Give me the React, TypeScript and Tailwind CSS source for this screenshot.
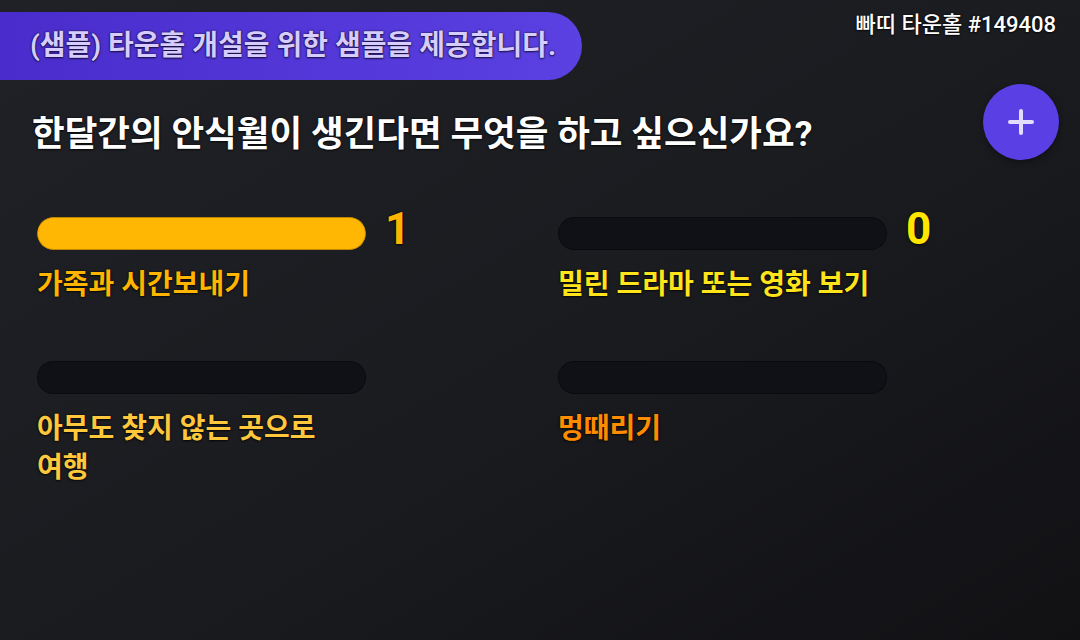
import React from "react"

type Option = {
  label: string
  count: number
  color: string
  countColor: string
}

const options: Option[] = [
  { label: "가족과 시간보내기", count: 1, color: "text-[#ffb400]", countColor: "text-[#ffb400]" },
  { label: "밀린 드라마 또는 영화 보기", count: 0, color: "text-[#ffe41c]", countColor: "text-[#ffe500]" },
  { label: "아무도 찾지 않는 곳으로 여행", count: 0, color: "text-[#ffc83c]", countColor: "" },
  { label: "멍때리기", count: 0, color: "text-[#ff8c00]", countColor: "" },
]

const total = 1
const shadow = "[text-shadow:0_0_2px_rgba(0,0,0,0.85),0_1px_2px_rgba(0,0,0,0.6)]"

function OptionItem({ option }: { option: Option }) {
  const filled = total > 0 ? (option.count / total) * 100 : 0
  return (
    <div className="flex flex-col">
      <div className="flex items-start h-[33px]">
        <div className="w-[329px] h-[33px] rounded-full bg-[#101116] shadow-[inset_0_0_0_1px_rgba(0,0,0,0.35)] overflow-hidden">
          {filled > 0 && (
            <div
              className="h-full rounded-full bg-[#ffb703] shadow-[inset_0_0_0_1px_rgba(150,100,0,0.6)]"
              style={{ width: `${filled}%` }}
            />
          )}
        </div>
        {option.countColor && (
          <span
            className={`ml-[19px] -mt-[10px] text-[44px] leading-[44px] font-bold font-['Roboto',sans-serif] ${option.countColor} ${shadow}`}
          >
            {option.count}
          </span>
        )}
      </div>
      <p
        className={`mt-[15px] w-[329px] break-keep text-[28px] leading-[39px] font-bold ${option.color} ${shadow}`}
      >
        {option.label}
      </p>
    </div>
  )
}

export default function App() {
  return (
    <div className="w-[1080px] h-[640px] overflow-hidden bg-linear-to-br from-[#202126] via-[#1b1c20] to-[#111114] font-['Roboto','Noto_Sans_CJK_KR',sans-serif] text-white">
      {/* 상단 배너 */}
      <div className="flex items-start justify-between">
        <div className="mt-3 h-[68px] w-[582px] rounded-r-full bg-linear-to-r from-[#4a2ccc] to-[#5b40e2] flex items-center pl-[30px]">
          <span className={`text-[28px] font-bold text-[#d6ccff] ${shadow}`}>
            (샘플) 타운홀 개설을 위한 샘플을 제공합니다.
          </span>
        </div>
        <div className={`pt-[8px] pr-6 text-[22px] font-medium text-white ${shadow}`}>
          빠띠 타운홀 #149408
        </div>
      </div>

      {/* 질문 */}
      <div className="mt-1 flex items-start justify-between pl-8 pr-[21px]">
        <h1 className={`pt-[27px] text-[35.5px] leading-[46px] font-bold ${shadow}`}>
          한달간의 안식월이 생긴다면 무엇을 하고 싶으신가요?
        </h1>
        <button className="w-[76px] h-[76px] rounded-full bg-[#5a3fe4] flex items-center justify-center shadow-[0_2px_6px_rgba(0,0,0,0.4)]">
          <svg width="28" height="28" viewBox="0 0 28 28" fill="none" stroke="#e4dcff" strokeWidth="4" strokeLinecap="round">
            <line x1="14" y1="3" x2="14" y2="25" />
            <line x1="3" y1="14" x2="25" y2="14" />
          </svg>
        </button>
      </div>

      {/* 선택지 */}
      <div className="mt-[57px] pl-[37px] grid grid-cols-[521px_521px] gap-y-[57px]">
        {options.map((o) => (
          <OptionItem key={o.label} option={o} />
        ))}
      </div>
    </div>
  )
}
